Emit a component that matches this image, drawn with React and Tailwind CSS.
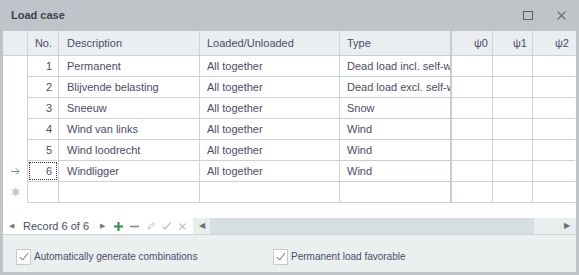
import React from 'react';

const rows = [
  { no: 1, desc: 'Permanent', loaded: 'All together', type: 'Dead load incl. self-weight' },
  { no: 2, desc: 'Blijvende belasting', loaded: 'All together', type: 'Dead load excl. self-weight' },
  { no: 3, desc: 'Sneeuw', loaded: 'All together', type: 'Snow' },
  { no: 4, desc: 'Wind van links', loaded: 'All together', type: 'Wind' },
  { no: 5, desc: 'Wind loodrecht', loaded: 'All together', type: 'Wind' },
  { no: 6, desc: 'Windligger', loaded: 'All together', type: 'Wind' },
];

const cols = 'grid grid-cols-[25px_31px_141px_140px_112px_41px_40px_42px]';
const cell = 'border-r border-b border-[#c9d3d8] whitespace-nowrap overflow-hidden';

function Check({ label }) {
  return (
    <label className="flex items-center gap-[3px]">
      <span className="w-[15px] h-[16px] bg-white border border-[#c3c9cd] flex items-center justify-center">
        <svg width="10" height="9" viewBox="0 0 10 9" fill="none">
          <path d="M1 5l2.5 3L9 1" stroke="#6b6b80" strokeWidth="1" />
        </svg>
      </span>
      <span className="text-[10px]">{label}</span>
    </label>
  );
}

export default function App() {
  return (
    <div className="w-[579px] h-[275px] bg-[#bec4c7] flex flex-col text-[11px] text-[#4c4c68] font-['Liberation_Sans',Arial,sans-serif] overflow-hidden">
      {/* title bar */}
      <div className="h-[31px] flex items-center pl-[11px] pr-[12px] shrink-0">
        <span className="font-bold text-[11px] text-[#3f4150] flex-1">Load case</span>
        <span className="w-[10px] h-[9px] border border-[#5f6266] mr-[24px]"></span>
        <svg width="9" height="9" viewBox="0 0 9 9" className="mr-[1px]">
          <path d="M0.5 0.5l8 8M8.5 0.5l-8 8" stroke="#6a6d71" strokeWidth="1.1" />
        </svg>
      </div>

      <div className="flex-1 mx-[3px] mb-[3px] bg-white flex flex-col">
        {/* header */}
        <div className={cols + ' h-[25px] bg-[#eaeef0] items-stretch'}>
          <div className="border-r border-b border-[#c9d3d8]"></div>
          <div className={cell + ' pr-[6px] flex items-center justify-end'}>No.</div>
          <div className={cell + ' pl-[8px] flex items-center'}>Description</div>
          <div className={cell + ' pl-[7px] flex items-center'}>Loaded/Unloaded</div>
          <div className="border-r-2 border-b border-[#c3ced4] pl-[7px] flex items-center">Type</div>
          <div className={cell + ' pr-[4px] flex items-center justify-end'}>ψ0</div>
          <div className={cell + ' pr-[5px] flex items-center justify-end'}>ψ1</div>
          <div className="border-b border-[#c9d3d8] pr-[6px] flex items-center justify-end">ψ2</div>
        </div>

        {rows.map((r) => (
          <div key={r.no} className={cols + ' h-[21px]'}>
            <div className="border-r border-[#c9d3d8] flex items-center justify-center">
              {r.no === 6 ? (
                <svg width="9" height="7" viewBox="0 0 9 7" fill="none">
                  <path d="M0 3.5h8M5 0.5l3 3-3 3" stroke="#6f8fb5" strokeWidth="1" />
                </svg>
              ) : null}
            </div>
            <div className={cell + ' pr-[6px] flex items-center justify-end relative'}>
              {r.no === 6 && (
                <span className="absolute inset-[1px] border border-dotted border-[#333]"></span>
              )}
              {r.no}
            </div>
            <div className={cell + ' pl-[8px] flex items-center'}>{r.desc}</div>
            <div className={cell + ' pl-[7px] flex items-center'}>{r.loaded}</div>
            <div className="border-r-2 border-b border-[#c3ced4] pl-[7px] flex items-center whitespace-nowrap overflow-hidden">{r.type}</div>
            <div className={cell}></div>
            <div className={cell}></div>
            <div className="border-b border-[#c9d3d8]"></div>
          </div>
        ))}

        {/* new item row */}
        <div className={cols + ' h-[21px]'}>
          <div className="border-r border-[#c9d3d8] flex items-center justify-center">
            <span className="text-[#c4c4c4] text-[11px] leading-none">✱</span>
          </div>
          <div className={cell}></div>
          <div className={cell}></div>
          <div className={cell}></div>
          <div className="border-r-2 border-b border-[#c3ced4]"></div>
          <div className={cell}></div>
          <div className={cell}></div>
          <div className="border-b border-[#c9d3d8]"></div>
        </div>

        <div className="h-[15px]"></div>

        {/* navigator + scrollbar */}
        <div className="h-[17px] flex items-center border-b border-[#c9d3d8]">
          <div className="w-[190px] flex items-center">
            <span className="ml-[6px] text-[7px] text-[#777]">◀</span>
            <span className="ml-[9px]">Record 6 of 6</span>
            <span className="ml-[11px] text-[7px] text-[#777]">▶</span>
            <svg width="9" height="9" viewBox="0 0 9 9" className="ml-[9px]">
              <path d="M4.5 0v9M0 4.5h9" stroke="#2f8f42" strokeWidth="2" />
            </svg>
            <svg width="9" height="9" viewBox="0 0 9 9" className="ml-[7px]">
              <path d="M0 4.5h9" stroke="#8a8a8a" strokeWidth="1.6" />
            </svg>
            <svg width="8" height="8" viewBox="0 0 8 8" className="ml-[8px]">
              <path d="M1 7l1-2.5L6 0.5l1.5 1.5-4 4z" fill="none" stroke="#c2c2c2" strokeWidth="1" />
            </svg>
            <svg width="9" height="8" viewBox="0 0 9 8" className="ml-[7px]">
              <path d="M0.5 4.5l2.5 2.5L8.5 0.5" fill="none" stroke="#bdbdbd" strokeWidth="1.2" />
            </svg>
            <svg width="7" height="7" viewBox="0 0 7 7" className="ml-[8px]">
              <path d="M0.5 0.5l6 6M6.5 0.5l-6 6" stroke="#c2c2c2" strokeWidth="1.1" />
            </svg>
          </div>
          <div className="flex-1 h-full flex">
            <div className="w-[17px] bg-[#e9edee] flex items-center justify-center text-[8px] text-[#6f6f6f]">◀</div>
            <div className="flex-1 bg-[#d6dee0]"></div>
            <div className="w-[42px] bg-[#e9edee] flex items-center justify-end pr-[6px] text-[8px] text-[#6f6f6f]">▶</div>
          </div>
        </div>

        {/* options */}
        <div className="flex-1 bg-[#eceff0] flex items-center pl-[13px] pt-[6px]">
          <div className="w-[257px]">
            <Check label="Automatically generate combinations" />
          </div>
          <Check label="Permanent load favorable" />
        </div>
      </div>
    </div>
  );
}
